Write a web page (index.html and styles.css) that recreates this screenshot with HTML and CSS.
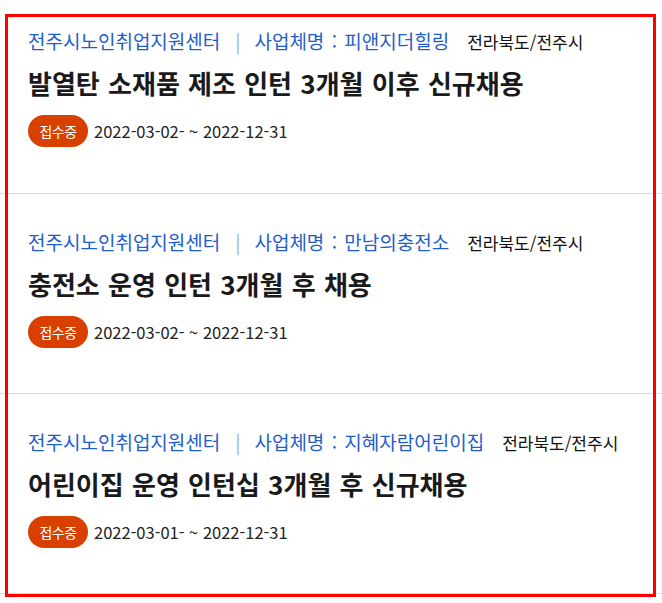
FILE: index.html
```html
<!DOCTYPE html>
<html lang="ko">
<head>
    <meta charset="UTF-8">
    <meta name="viewport" content="width=device-width, initial-scale=1.0">
    <title>채용 공고</title>
    <link rel="stylesheet" href="styles.css">
</head>
<body>
    <div class="board">
        <ul class="job-list">
            <li class="job">
                <div class="job-meta">
                    <span class="org">전주시노인취업지원센터</span>
                    <span class="bar">|</span>
                    <span class="org">사업체명 : 피앤지더힐링</span>
                    <span class="area">전라북도/전주시</span>
                </div>
                <h2 class="job-title">발열탄 소재품 제조 인턴 3개월 이후 신규채용</h2>
                <div class="job-period">
                    <span class="badge">접수중</span>
                    <span class="date">2022-03-02- ~ 2022-12-31</span>
                </div>
            </li>
            <li class="job">
                <div class="job-meta">
                    <span class="org">전주시노인취업지원센터</span>
                    <span class="bar">|</span>
                    <span class="org">사업체명 : 만남의충전소</span>
                    <span class="area">전라북도/전주시</span>
                </div>
                <h2 class="job-title">충전소 운영 인턴 3개월 후 채용</h2>
                <div class="job-period">
                    <span class="badge">접수중</span>
                    <span class="date">2022-03-02- ~ 2022-12-31</span>
                </div>
            </li>
            <li class="job">
                <div class="job-meta">
                    <span class="org">전주시노인취업지원센터</span>
                    <span class="bar">|</span>
                    <span class="org">사업체명 : 지혜자람어린이집</span>
                    <span class="area">전라북도/전주시</span>
                </div>
                <h2 class="job-title">어린이집 운영 인턴십 3개월 후 신규채용</h2>
                <div class="job-period">
                    <span class="badge">접수중</span>
                    <span class="date">2022-03-01- ~ 2022-12-31</span>
                </div>
            </li>
        </ul>
        <div class="highlight"></div>
    </div>
</body>
</html>
```

FILE: styles.css
```css
:root {
    --link-color: #1f5dc9;
    --bar-color: #8ab4e8;
    --text-color: #222222;
    --line-color: #dddddd;
    --badge-color: #d94000;
    --mark-color: #ff0000;
}
body {
    margin: 0;
    font-family: 'Noto Sans CJK KR', 'Noto Sans', sans-serif;
    color: var(--text-color);
    background-color: #ffffff;
}
.board {
    position: relative;
    height: 603px;
    overflow: hidden;
}
.job-list {
    list-style: none;
    margin: 0;
    padding: 0;
}

/* red highlight box drawn over the list */
.highlight {
    position: absolute;
    left: 5px;
    top: 14px;
    width: 651px;
    height: 583px;
    border: 3px solid var(--mark-color);
    box-sizing: border-box;
    pointer-events: none;
}
.job {
    height: 200px;
    box-sizing: border-box;
    padding: 37px 28px 0;
    border-bottom: 1px solid var(--line-color);
}
.job:first-child {
    height: 194px;
    padding-top: 30px;
}
.job-meta {
    display: flex;
    align-items: baseline;
    font-size: 19px;
    line-height: 22px;
    white-space: nowrap;
}
.org {
    color: var(--link-color);
    word-spacing: 2px;
}
.bar {
    color: var(--bar-color);
    margin: 0 14px 0 15px;
}
.area {
    margin-left: 18px;
    font-size: 17px;
    color: #111111;
}
.job-title {
    margin: 15px 0 0;
    font-size: 26px;
    line-height: 30px;
    font-weight: 700;
    word-spacing: 1px;
    color: #1a1a1a;
}
.job-period {
    display: flex;
    align-items: center;
    gap: 6px;
    margin-top: 17px;
}
.badge {
    display: inline-flex;
    align-items: center;
    justify-content: center;
    width: 60px;
    height: 32px;
    border-radius: 16px;
    background-color: var(--badge-color);
    color: #ffffff;
    font-size: 14px;
    letter-spacing: -0.5px;
}
.date {
    font-size: 16.5px;
    color: #222222;
}
```
